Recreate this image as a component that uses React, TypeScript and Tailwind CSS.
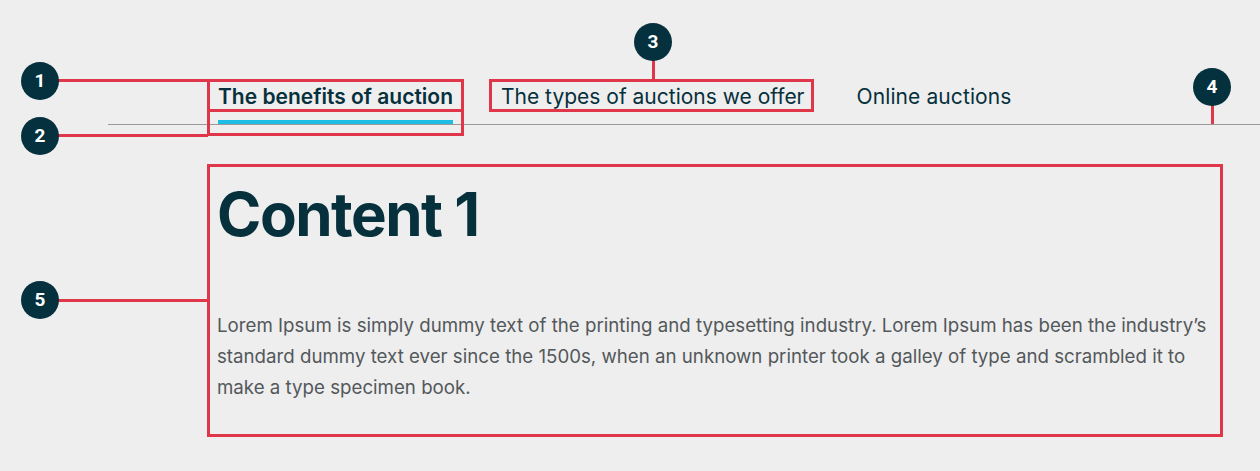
import React from "react";

const RED_BOX = "pointer-events-none absolute border-[3px] border-[#e0364a]";

function Badge({ n, className }: { n: string; className: string }) {
  return (
    <div
      className={`absolute w-[38px] h-[38px] rounded-full bg-[#04313d] text-white flex items-center justify-center text-[19px] font-bold ${className}`}
      style={{ fontFamily: "Roboto, sans-serif" }}
    >
      {n}
    </div>
  );
}

export default function App() {
  return (
    <div
      className="relative w-full h-[471px] bg-[#eeeeee] overflow-hidden"
      style={{ fontFamily: "Inter, 'Noto Sans', sans-serif" }}
    >
      {/* Tabs */}
      <nav className="ml-[108px] pt-[79px] border-b border-[#9a9a9a] flex pl-[99px] gap-[25px] text-[#06303c] text-[21px]">
        <div className="relative flex flex-col px-[11px] pt-[1px]">
          <span className="h-[30px] leading-[34px] font-semibold whitespace-nowrap">The benefits of auction</span>
          <span className="mt-[10px] h-[4px] bg-[#1dbde6]" />
          <div className={`${RED_BOX} left-0 right-0 top-0 h-[33px]`} />
          <div className={`${RED_BOX} left-0 right-0 top-[30px] bottom-[-12px]`} />
        </div>
        <div className="relative flex flex-col pl-[12px] pr-[9px] pt-[1px]">
          <span className="h-[30px] leading-[34px] whitespace-nowrap">The types of auctions we offer</span>
          <span className="mt-[10px] h-[4px]" />
          <div className={`${RED_BOX} left-0 right-0 top-0 h-[33px]`} />
        </div>
        <div className="flex flex-col pl-[18px] pt-[1px]">
          <span className="h-[30px] leading-[34px] whitespace-nowrap tracking-[0.1px]">Online auctions</span>
          <span className="mt-[10px] h-[4px]" />
        </div>
      </nav>

      {/* Content */}
      <section className="relative ml-[207px] mt-[39px] w-[1016px] h-[273px] px-[10px] pt-[14px]">
        <h1 className="text-[60px] leading-[72px] font-bold text-[#06303c] tracking-[-1.5px]">Content 1</h1>
        <p className="mt-[60px] text-[18.7px] leading-[31px] text-[#53585b]">
          Lorem Ipsum is simply dummy text of the printing and typesetting industry. Lorem Ipsum has been the industry’s standard dummy text ever since the 1500s, when an unknown printer took a galley of type and scrambled it to make a type specimen book.
        </p>
        <div className={`${RED_BOX} inset-0`} />
      </section>

      {/* connector lines */}
      <div className="absolute left-[58px] top-[79px] w-[150px] h-[3px] bg-[#e0364a]" />
      <div className="absolute left-[58px] top-[134px] w-[150px] h-[3px] bg-[#e0364a]" />
      <div className="absolute left-[652px] top-[60px] w-[3px] h-[20px] bg-[#e0364a]" />
      <div className="absolute left-[1211px] top-[105px] w-[3px] h-[19px] bg-[#e0364a]" />
      <div className="absolute left-[58px] top-[299px] w-[150px] h-[3px] bg-[#e0364a]" />

      <Badge n="1" className="left-[21px] top-[62px]" />
      <Badge n="2" className="left-[21px] top-[117px]" />
      <Badge n="3" className="left-[634px] top-[23px]" />
      <Badge n="4" className="left-[1193px] top-[68px]" />
      <Badge n="5" className="left-[21px] top-[281px]" />
    </div>
  );
}
